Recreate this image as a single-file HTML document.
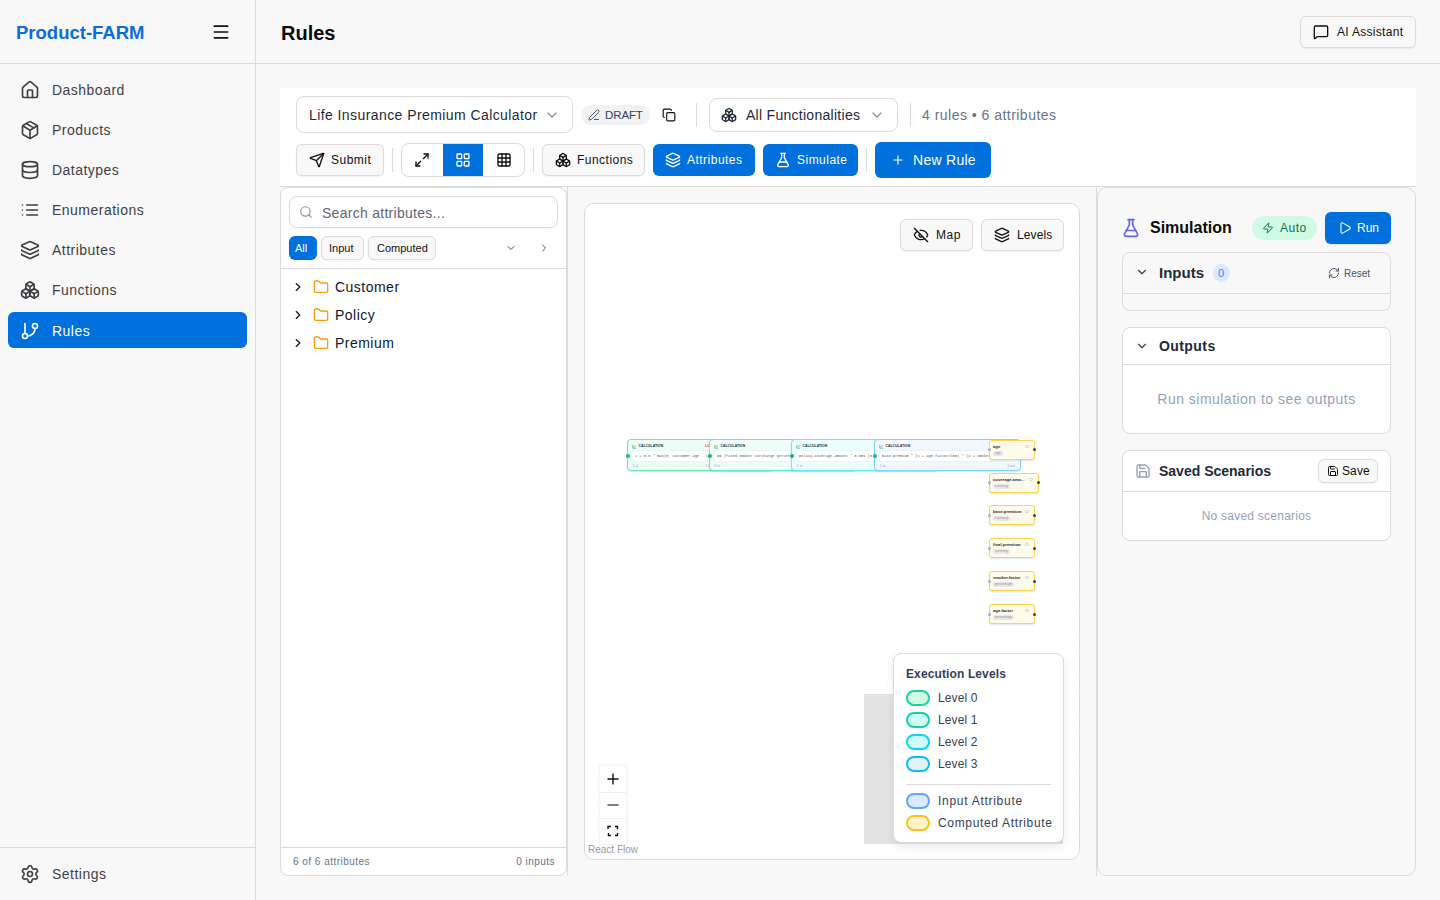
<!DOCTYPE html>
<html><head><meta charset="utf-8">
<style>
*{box-sizing:border-box;margin:0;padding:0}
html,body{width:1440px;height:900px;overflow:hidden}
body{font-family:"Liberation Sans",sans-serif;background:#f8f8f8;color:#0a0a0a;position:relative;letter-spacing:0.03em}
.a{position:absolute}
svg{display:block}
.ic{fill:none;stroke:currentColor;stroke-width:2;stroke-linecap:round;stroke-linejoin:round}
.b{font-weight:700;letter-spacing:0}
.bd{border:1px solid #e0d9dc}
/* sidebar */
#sb{left:0;top:0;width:256px;height:900px;border-right:1px solid #e0d9dc;background:#f8f8f8}
.nav{left:8px;width:239px;height:36px;border-radius:6px;color:#3f3f46;font-size:14px}
.nav svg{position:absolute;left:12px;top:8.5px}
.nav span{position:absolute;left:44px;top:10px;line-height:18px}
.nav.act{background:#0070dd;color:#fff}

.btn{border:1px solid #e0d9dc;border-radius:6px;background:#f8f8f8;box-shadow:0 1px 2px rgba(0,0,0,.06)}
.pbtn{border-radius:6px;background:#0070dd;color:#fff}
.t14{font-size:14px;line-height:18px}
.t12{font-size:12px;line-height:16px}
.sep{width:1px;background:#e0d9dc}

.cn{position:absolute;top:439px;width:147px;height:32px;border:1px solid;border-radius:4px;box-shadow:0 1px 1.5px rgba(0,0,0,.12)}
.cn .hi{position:absolute;left:4px;top:4px;width:5px;height:5px}
.cn .ht{position:absolute;left:10.5px;top:3.5px;font-size:3.4px;line-height:5px;font-weight:700;color:#1e293b;letter-spacing:0.05px}
.cn .cb{position:absolute;left:4px;top:11px;width:137px;height:10px;border-radius:3px;background:#fff;box-shadow:0 0 0 0.5px rgba(0,0,0,.05)}
.cn .ct{position:absolute;left:7px;top:13.5px;font-family:"Liberation Mono",monospace;font-size:3.7px;line-height:5px;color:#475569;letter-spacing:0;white-space:nowrap;overflow:hidden;width:133px}
.cn .fl{position:absolute;left:4.5px;top:23.5px;font-size:3.5px;line-height:5px;color:#94a3b8;letter-spacing:0}
.cn .fr{position:absolute;right:5px;top:23.5px;font-size:3.5px;line-height:5px;color:#94a3b8;letter-spacing:0}
.cn .hd{position:absolute;left:-2.5px;top:13.5px;width:4px;height:4px;border-radius:50%;background:#10b981}
.an{position:absolute;left:989px;width:46px;height:20px;border:1px solid #fcd34d;border-radius:3px;background:#fffbeb;box-shadow:0 1px 1.5px rgba(0,0,0,.1)}
.an .nm{position:absolute;left:3px;top:3px;font-size:4.2px;line-height:5px;font-weight:700;color:#1e293b;letter-spacing:0;white-space:nowrap}
.an .ch{position:absolute;left:3px;top:10px;height:5px;padding:0 2px;border-radius:2px;background:#e5e7eb;font-size:3.4px;line-height:5px;color:#8b93a3;letter-spacing:0}
.an .ei{position:absolute;right:5px;top:4px;width:4px;height:3px;border:0.8px solid #d4d7dd;border-radius:1px}
.an .hl{position:absolute;left:-2px;top:7.5px;width:3px;height:3px;border-radius:50%;background:#a8b0bd}
.an .hr{position:absolute;right:-2px;top:7.5px;width:3px;height:3px;border-radius:50%;background:#334155}
</style></head>
<body>
<!-- Sidebar -->
<div id="sb" class="a">
  <div class="a b" style="left:16px;top:22px;font-size:18.5px;line-height:22px;color:#0b6ddc">Product-FARM</div>
  <svg class="a ic" style="left:211px;top:22px;color:#111" width="20" height="20" viewBox="0 0 24 24"><path d="M4 5h16M4 12h16M4 19h16"/></svg>
  <div class="a" style="left:0;top:63px;width:256px;height:1px;background:#e0d9dc"></div>

  <div class="a nav" style="top:71px"><svg class="ic" width="20" height="20" viewBox="0 0 24 24"><path d="M15 21v-8a1 1 0 0 0-1-1h-4a1 1 0 0 0-1 1v8"/><path d="M3 10a2 2 0 0 1 .709-1.528l7-5.999a2 2 0 0 1 2.582 0l7 5.999A2 2 0 0 1 21 10v9a2 2 0 0 1-2 2H5a2 2 0 0 1-2-2z"/></svg><span>Dashboard</span></div>
  <div class="a nav" style="top:111px"><svg class="ic" width="20" height="20" viewBox="0 0 24 24"><path d="M11 21.73a2 2 0 0 0 2 0l7-4A2 2 0 0 0 21 16V8a2 2 0 0 0-1-1.73l-7-4a2 2 0 0 0-2 0l-7 4A2 2 0 0 0 3 8v8a2 2 0 0 0 1 1.73z"/><path d="M12 22V12"/><path d="m3.3 7 7.703 4.734a2 2 0 0 0 1.994 0L20.7 7"/><path d="m7.5 4.27 9 5.15"/></svg><span>Products</span></div>
  <div class="a nav" style="top:151px"><svg class="ic" width="20" height="20" viewBox="0 0 24 24"><ellipse cx="12" cy="5" rx="9" ry="3"/><path d="M3 5V19A9 3 0 0 0 21 19V5"/><path d="M3 12A9 3 0 0 0 21 12"/></svg><span>Datatypes</span></div>
  <div class="a nav" style="top:191px"><svg class="ic" width="20" height="20" viewBox="0 0 24 24"><path d="M3 12h.01"/><path d="M3 18h.01"/><path d="M3 6h.01"/><path d="M8 12h13"/><path d="M8 18h13"/><path d="M8 6h13"/></svg><span>Enumerations</span></div>
  <div class="a nav" style="top:231px"><svg class="ic" width="20" height="20" viewBox="0 0 24 24"><path d="M12.83 2.18a2 2 0 0 0-1.66 0L2.6 6.08a1 1 0 0 0 0 1.83l8.58 3.91a2 2 0 0 0 1.66 0l8.58-3.9a1 1 0 0 0 0-1.83z"/><path d="M2 12a1 1 0 0 0 .58.91l8.6 3.91a2 2 0 0 0 1.65 0l8.58-3.9A1 1 0 0 0 22 12"/><path d="M2 17a1 1 0 0 0 .58.91l8.6 3.91a2 2 0 0 0 1.65 0l8.58-3.9A1 1 0 0 0 22 17"/></svg><span>Attributes</span></div>
  <div class="a nav" style="top:271px"><svg class="ic" width="20" height="20" viewBox="0 0 24 24"><path d="M2.97 12.92A2 2 0 0 0 2 14.63v3.24a2 2 0 0 0 .97 1.71l3 1.8a2 2 0 0 0 2.06 0L12 19v-5.5l-5-3-4.03 2.42Z"/><path d="m7 16.5-4.74-2.85"/><path d="m7 16.5 5-3"/><path d="M7 16.5v5.17"/><path d="M12 13.5V19l3.970 2.38a2 2 0 0 0 2.06 0l3-1.8a2 2 0 0 0 .97-1.71v-3.24a2 2 0 0 0-.97-1.71L17 10.5l-5 3Z"/><path d="m17 16.5-5-3"/><path d="m17 16.5 4.740-2.85"/><path d="M17 16.5v5.17"/><path d="M7.97 4.42A2 2 0 0 0 7 6.13v4.37l5 3 5-3V6.13a2 2 0 0 0-.97-1.71l-3-1.8a2 2 0 0 0-2.06 0l-3 1.8Z"/><path d="M12 8 7.26 5.15"/><path d="m12 8 4.74-2.85"/><path d="M12 13.5V8"/></svg><span>Functions</span></div>
  <div class="a nav act" style="top:312px"><svg class="ic" width="20" height="20" viewBox="0 0 24 24"><line x1="6" x2="6" y1="3" y2="15"/><circle cx="18" cy="6" r="3"/><circle cx="6" cy="18" r="3"/><path d="M18 9a9 9 0 0 1-9 9"/></svg><span>Rules</span></div>

  <div class="a" style="left:0;top:847px;width:256px;height:1px;background:#e0d9dc"></div>
  <div class="a nav" style="top:855px"><svg class="ic" style="top:9px" width="20" height="20" viewBox="0 0 24 24"><path d="M9.671 4.136a2.34 2.34 0 0 1 4.659 0 2.34 2.34 0 0 0 3.319 1.915 2.34 2.34 0 0 1 2.33 4.033 2.34 2.34 0 0 0 0 3.831 2.34 2.34 0 0 1-2.33 4.033 2.34 2.34 0 0 0-3.319 1.915 2.34 2.34 0 0 1-4.659 0 2.34 2.34 0 0 0-3.32-1.915 2.34 2.34 0 0 1-2.33-4.033 2.34 2.34 0 0 0 0-3.831A2.34 2.34 0 0 1 6.35 6.051a2.34 2.34 0 0 0 3.319-1.915"/><circle cx="12" cy="12" r="3"/></svg><span>Settings</span></div>
</div>

<!-- Header -->
<div class="a b" style="left:281px;top:21px;font-size:20px;line-height:24px;color:#0a0a0a">Rules</div>
<div class="a" style="left:256px;top:63px;width:1184px;height:1px;background:#e0d9dc"></div>


<!-- AI Assistant -->
<div class="a btn" style="left:1300px;top:16px;width:116px;height:32px"></div>
<svg class="a ic" style="left:1313px;top:24px;color:#111" width="16" height="16" viewBox="0 0 24 24"><path d="M22 17a2 2 0 0 1-2 2H6.828a2 2 0 0 0-1.414.586l-2.202 2.202A.71.71 0 0 1 2 21.286V5a2 2 0 0 1 2-2h16a2 2 0 0 1 2 2z"/></svg>
<div class="a t12" style="left:1337px;top:24px;color:#111;letter-spacing:0.025em">AI Assistant</div>

<!-- Toolbar -->
<div class="a" style="left:280px;top:88px;width:1136px;height:99px;background:#fff;border-bottom:1px solid #e0d9dc"></div>
<div class="a bd" style="left:296px;top:96px;width:277px;height:37px;border-radius:8px;background:#fff"></div>
<div class="a t14" style="left:309px;top:106px;color:#1e293b;letter-spacing:0.03em">Life Insurance Premium Calculator</div>
<svg class="a ic" style="left:544px;top:107px;color:#8a94a6" width="16" height="16" viewBox="0 0 24 24"><path d="m6 9 6 6 6-6"/></svg>
<div class="a" style="left:581px;top:105px;width:69px;height:20px;border-radius:10px;background:#f1f2f4"></div>
<svg class="a ic" style="left:588px;top:109px;color:#475569" width="12" height="12" viewBox="0 0 24 24"><path d="M13 21h8"/><path d="M21.174 6.812a1 1 0 0 0-3.986-3.987L3.842 16.174a2 2 0 0 0-.5.83l-1.321 4.352a.5.5 0 0 0 .623.622l4.353-1.32a2 2 0 0 0 .83-.497z"/></svg>
<div class="a" style="left:605px;top:107px;font-size:11.5px;line-height:16px;color:#334155;letter-spacing:-0.01em">DRAFT</div>
<svg class="a ic" style="left:662px;top:108px;color:#111" width="14" height="14" viewBox="0 0 24 24"><rect width="14" height="14" x="8" y="8" rx="2" ry="2"/><path d="M4 16c-1.1 0-2-.9-2-2V4c0-1.1.9-2 2-2h10c1.1 0 2 .9 2 2"/></svg>
<div class="a sep" style="left:696px;top:103px;height:24px"></div>
<div class="a bd" style="left:709px;top:98px;width:189px;height:34px;border-radius:8px;background:#fff"></div>
<svg class="a ic" style="left:721px;top:107px;color:#1e293b" width="16" height="16" viewBox="0 0 24 24"><path d="M2.97 12.92A2 2 0 0 0 2 14.63v3.24a2 2 0 0 0 .97 1.71l3 1.8a2 2 0 0 0 2.06 0L12 19v-5.5l-5-3-4.03 2.42Z"/><path d="m7 16.5-4.74-2.85"/><path d="m7 16.5 5-3"/><path d="M7 16.5v5.17"/><path d="M12 13.5V19l3.97 2.38a2 2 0 0 0 2.06 0l3-1.8a2 2 0 0 0 .97-1.71v-3.24a2 2 0 0 0-.97-1.71L17 10.5l-5 3Z"/><path d="m17 16.5-5-3"/><path d="m17 16.5 4.74-2.85"/><path d="M17 16.5v5.17"/><path d="M7.97 4.42A2 2 0 0 0 7 6.13v4.37l5 3 5-3V6.13a2 2 0 0 0-.97-1.71l-3-1.8a2 2 0 0 0-2.06 0l-3 1.8Z"/><path d="M12 8 7.26 5.15"/><path d="m12 8 4.74-2.85"/><path d="M12 13.5V8"/></svg>
<div class="a t14" style="left:746px;top:106px;color:#1e293b;letter-spacing:0.02em">All Functionalities</div>
<svg class="a ic" style="left:869px;top:107px;color:#8a94a6" width="16" height="16" viewBox="0 0 24 24"><path d="m6 9 6 6 6-6"/></svg>
<div class="a sep" style="left:910px;top:103px;height:24px"></div>
<div class="a t14" style="left:922px;top:106px;color:#64748b">4 rules • 6 attributes</div>

<!-- row 2 -->
<div class="a btn" style="left:296px;top:144px;width:88px;height:32px"></div>
<svg class="a ic" style="left:309px;top:152px;color:#111" width="16" height="16" viewBox="0 0 24 24"><path d="M14.536 21.686a.5.5 0 0 0 .937-.024l6.5-19a.496.496 0 0 0-.635-.635l-19 6.5a.5.5 0 0 0-.024.937l7.93 3.18a2 2 0 0 1 1.112 1.11z"/><path d="m21.854 2.147-10.94 10.939"/></svg>
<div class="a t12" style="left:331px;top:152px;color:#111">Submit</div>
<div class="a sep" style="left:392px;top:148px;height:24px"></div>
<div class="a bd" style="left:401px;top:143px;width:124px;height:34px;border-radius:8px;background:#fff;overflow:hidden"><div class="a" style="left:41px;top:0;width:40px;height:32px;background:#0070dd"></div></div>
<svg class="a ic" style="left:414px;top:152px;color:#111" width="16" height="16" viewBox="0 0 24 24"><polyline points="15 3 21 3 21 9"/><polyline points="9 21 3 21 3 15"/><line x1="21" x2="14" y1="3" y2="10"/><line x1="3" x2="10" y1="21" y2="14"/></svg>
<svg class="a ic" style="left:455px;top:152px;color:#fff" width="16" height="16" viewBox="0 0 24 24"><rect width="7" height="7" x="3" y="3" rx="1"/><rect width="7" height="7" x="14" y="3" rx="1"/><rect width="7" height="7" x="14" y="14" rx="1"/><rect width="7" height="7" x="3" y="14" rx="1"/></svg>
<svg class="a ic" style="left:496px;top:152px;color:#111" width="16" height="16" viewBox="0 0 24 24"><rect width="18" height="18" x="3" y="3" rx="2"/><path d="M3 9h18"/><path d="M3 15h18"/><path d="M9 3v18"/><path d="M15 3v18"/></svg>
<div class="a sep" style="left:533px;top:148px;height:24px"></div>
<div class="a btn" style="left:542px;top:144px;width:103px;height:32px"></div>
<svg class="a ic" style="left:555px;top:152px;color:#111" width="16" height="16" viewBox="0 0 24 24"><path d="M2.97 12.92A2 2 0 0 0 2 14.63v3.24a2 2 0 0 0 .97 1.71l3 1.8a2 2 0 0 0 2.06 0L12 19v-5.5l-5-3-4.03 2.42Z"/><path d="m7 16.5-4.74-2.85"/><path d="m7 16.5 5-3"/><path d="M7 16.5v5.17"/><path d="M12 13.5V19l3.97 2.38a2 2 0 0 0 2.06 0l3-1.8a2 2 0 0 0 .97-1.71v-3.24a2 2 0 0 0-.97-1.71L17 10.5l-5 3Z"/><path d="m17 16.5-5-3"/><path d="m17 16.5 4.74-2.85"/><path d="M17 16.5v5.17"/><path d="M7.97 4.42A2 2 0 0 0 7 6.13v4.37l5 3 5-3V6.13a2 2 0 0 0-.97-1.71l-3-1.8a2 2 0 0 0-2.06 0l-3 1.8Z"/><path d="M12 8 7.26 5.15"/><path d="m12 8 4.74-2.85"/><path d="M12 13.5V8"/></svg>
<div class="a t12" style="left:577px;top:152px;color:#111">Functions</div>
<div class="a pbtn" style="left:653px;top:144px;width:102px;height:32px"></div>
<svg class="a ic" style="left:665px;top:152px;color:#fff" width="16" height="16" viewBox="0 0 24 24"><path d="M12.83 2.18a2 2 0 0 0-1.66 0L2.6 6.08a1 1 0 0 0 0 1.83l8.58 3.91a2 2 0 0 0 1.66 0l8.58-3.9a1 1 0 0 0 0-1.83z"/><path d="M2 12a1 1 0 0 0 .58.91l8.6 3.91a2 2 0 0 0 1.65 0l8.58-3.9A1 1 0 0 0 22 12"/><path d="M2 17a1 1 0 0 0 .58.91l8.6 3.91a2 2 0 0 0 1.65 0l8.58-3.9A1 1 0 0 0 22 17"/></svg>
<div class="a t12" style="left:687px;top:152px;color:#fff">Attributes</div>
<div class="a pbtn" style="left:763px;top:144px;width:95px;height:32px"></div>
<svg class="a ic" style="left:775px;top:152px;color:#fff" width="16" height="16" viewBox="0 0 24 24"><path d="M14 2v6a2 2 0 0 0 .245.96l5.51 10.08A2 2 0 0 1 18 22H6a2 2 0 0 1-1.755-2.96l5.51-10.08A2 2 0 0 0 10 8V2"/><path d="M6.453 15h11.094"/><path d="M8.5 2h7"/></svg>
<div class="a t12" style="left:797px;top:152px;color:#fff">Simulate</div>
<div class="a sep" style="left:866px;top:148px;height:24px"></div>
<div class="a pbtn" style="left:875px;top:142px;width:116px;height:36px"></div>
<svg class="a ic" style="left:891px;top:153px;color:#fff" width="14" height="14" viewBox="0 0 24 24"><path d="M5 12h14"/><path d="M12 5v14"/></svg>
<div class="a t14" style="left:913px;top:151px;color:#fff;letter-spacing:0.02em">New Rule</div>

<!-- Left panel -->
<div class="a bd" style="left:280px;top:187px;width:287px;height:689px;border-radius:8px;background:#fff"></div>
<div class="a sep" style="left:567px;top:186px;height:690px"></div>
<div class="a bd" style="left:289px;top:196px;width:269px;height:32px;border-radius:8px;background:#fff;box-shadow:0 1px 2px rgba(0,0,0,.05)"></div>
<svg class="a ic" style="left:299px;top:205px;color:#8a94a6" width="14" height="14" viewBox="0 0 24 24"><circle cx="11" cy="11" r="8"/><path d="m21 21-4.3-4.3"/></svg>
<div class="a t14" style="left:322px;top:204px;color:#5f6675;letter-spacing:0.02em">Search attributes...</div>
<div class="a" style="left:289px;top:236px;width:28px;height:24px;border-radius:6px;background:#0070dd"></div>
<div class="a" style="left:295px;top:241px;font-size:11px;line-height:14px;letter-spacing:0;color:#fff">All</div>
<div class="a btn" style="left:321px;top:236px;width:43px;height:24px"></div>
<div class="a" style="left:329px;top:241px;font-size:11px;line-height:14px;letter-spacing:0;color:#111">Input</div>
<div class="a btn" style="left:368px;top:236px;width:68px;height:24px"></div>
<div class="a" style="left:377px;top:241px;font-size:11px;line-height:14px;letter-spacing:0;color:#111">Computed</div>
<svg class="a ic" style="left:505px;top:242px;color:#555" width="12" height="12" viewBox="0 0 24 24"><path d="m6 9 6 6 6-6"/></svg>
<svg class="a ic" style="left:538px;top:242px;color:#555" width="12" height="12" viewBox="0 0 24 24"><path d="m9 18 6-6-6-6"/></svg>
<div class="a" style="left:281px;top:268px;width:285px;height:1px;background:#e0d9dc"></div>

<svg class="a ic" style="left:291px;top:280px;color:#111" width="14" height="14" viewBox="0 0 24 24"><path d="m9 18 6-6-6-6"/></svg>
<svg class="a ic" style="left:313px;top:279px;color:#f59e0b" width="16" height="16" viewBox="0 0 24 24"><path d="M20 20a2 2 0 0 0 2-2V8a2 2 0 0 0-2-2h-7.9a2 2 0 0 1-1.69-.9L9.6 3.9A2 2 0 0 0 7.93 3H4a2 2 0 0 0-2 2v13a2 2 0 0 0 2 2Z"/></svg>
<div class="a t14" style="left:335px;top:278px;color:#0f172a">Customer</div>
<svg class="a ic" style="left:291px;top:308px;color:#111" width="14" height="14" viewBox="0 0 24 24"><path d="m9 18 6-6-6-6"/></svg>
<svg class="a ic" style="left:313px;top:307px;color:#f59e0b" width="16" height="16" viewBox="0 0 24 24"><path d="M20 20a2 2 0 0 0 2-2V8a2 2 0 0 0-2-2h-7.9a2 2 0 0 1-1.69-.9L9.6 3.9A2 2 0 0 0 7.93 3H4a2 2 0 0 0-2 2v13a2 2 0 0 0 2 2Z"/></svg>
<div class="a t14" style="left:335px;top:306px;color:#0f172a">Policy</div>
<svg class="a ic" style="left:291px;top:336px;color:#111" width="14" height="14" viewBox="0 0 24 24"><path d="m9 18 6-6-6-6"/></svg>
<svg class="a ic" style="left:313px;top:335px;color:#f59e0b" width="16" height="16" viewBox="0 0 24 24"><path d="M20 20a2 2 0 0 0 2-2V8a2 2 0 0 0-2-2h-7.9a2 2 0 0 1-1.69-.9L9.6 3.9A2 2 0 0 0 7.93 3H4a2 2 0 0 0-2 2v13a2 2 0 0 0 2 2Z"/></svg>
<div class="a t14" style="left:335px;top:334px;color:#0f172a">Premium</div>

<div class="a" style="left:281px;top:847px;width:285px;height:1px;background:#e0d9dc"></div>
<div class="a" style="left:293px;top:855px;font-size:10px;line-height:13px;color:#64748b">6 of 6 attributes</div>
<div class="a" style="left:454px;top:855px;width:101px;text-align:right;font-size:10px;line-height:13px;color:#64748b">0 inputs</div>

<!-- Canvas -->
<div class="a bd" style="left:584px;top:203px;width:496px;height:657px;border-radius:10px;background:#fff;background-image:radial-gradient(circle,#fafafa 0.5px,transparent 0.7px);background-size:5px 5px"></div>
<div class="a sep" style="left:1096px;top:186px;height:690px"></div>

<!-- Right panel -->
<div class="a bd" style="left:1097px;top:187px;width:319px;height:689px;border-radius:10px;background:#f8f8f8"></div>

<svg class="a ic" style="left:1121px;top:218px;color:#6366f1" width="20" height="20" viewBox="0 0 24 24"><path d="M14 2v6a2 2 0 0 0 .245.96l5.51 10.08A2 2 0 0 1 18 22H6a2 2 0 0 1-1.755-2.96l5.51-10.08A2 2 0 0 0 10 8V2"/><path d="M6.453 15h11.094"/><path d="M8.5 2h7"/></svg>
<div class="a b" style="left:1150px;top:218px;font-size:16px;line-height:20px;color:#0a0a0a">Simulation</div>
<div class="a" style="left:1252px;top:216px;width:65px;height:24px;border-radius:12px;background:#d1fae5"></div>
<svg class="a ic" style="left:1262px;top:222px;color:#047857" width="12" height="12" viewBox="0 0 24 24"><path d="M4 14a1 1 0 0 1-.78-1.63l9.9-10.2a.5.5 0 0 1 .86.46l-1.92 6.02A1 1 0 0 0 13 10h7a1 1 0 0 1 .78 1.63l-9.9 10.2a.5.5 0 0 1-.86-.46l1.92-6.02A1 1 0 0 0 11 14z"/></svg>
<div class="a t12" style="left:1280px;top:220px;color:#047857">Auto</div>
<div class="a pbtn" style="left:1325px;top:212px;width:66px;height:32px;box-shadow:0 1px 2px rgba(0,0,0,.1)"></div>
<svg class="a ic" style="left:1338px;top:221px;color:#fff;stroke-width:1.8" width="14" height="14" viewBox="0 0 24 24"><path d="M5 5a2 2 0 0 1 3.008-1.728l11.997 6.998a2 2 0 0 1 .003 3.458l-12 7A2 2 0 0 1 5 19z"/></svg>
<div class="a t12" style="left:1357px;top:220px;color:#fff;letter-spacing:0">Run</div>

<div class="a bd" style="left:1122px;top:252px;width:269px;height:59px;border-radius:8px;background:#f8f8f8"></div>
<div class="a" style="left:1123px;top:293px;width:267px;height:1px;background:#e0d9dc"></div>
<svg class="a ic" style="left:1135px;top:265px;color:#334155" width="14" height="14" viewBox="0 0 24 24"><path d="m6 9 6 6 6-6"/></svg>
<div class="a b" style="left:1159px;top:264px;font-size:15px;line-height:18px;color:#1e293b">Inputs</div>
<div class="a" style="left:1213px;top:264px;width:17px;height:18px;border-radius:9px;background:#dbeafe"></div>
<div class="a" style="left:1218px;top:266px;font-size:11px;line-height:14px;color:#3b82f6">0</div>
<svg class="a ic" style="left:1328px;top:267px;color:#475569" width="12" height="12" viewBox="0 0 24 24"><path d="M3 12a9 9 0 0 1 9-9 9.75 9.75 0 0 1 6.74 2.74L21 8"/><path d="M21 3v5h-5"/><path d="M21 12a9 9 0 0 1-9 9 9.75 9.75 0 0 1-6.74-2.74L3 16"/><path d="M8 16H3v5"/></svg>
<div class="a" style="left:1344px;top:267px;font-size:10px;line-height:14px;color:#475569;letter-spacing:0">Reset</div>

<div class="a bd" style="left:1122px;top:327px;width:269px;height:107px;border-radius:8px;background:#fff"></div>
<div class="a" style="left:1123px;top:364px;width:267px;height:1px;background:#e0d9dc"></div>
<svg class="a ic" style="left:1135px;top:339px;color:#334155" width="14" height="14" viewBox="0 0 24 24"><path d="m6 9 6 6 6-6"/></svg>
<div class="a b" style="left:1159px;top:337px;font-size:14px;line-height:18px;color:#1e293b;letter-spacing:0.03em">Outputs</div>
<div class="a t14" style="left:1122px;top:390px;width:269px;text-align:center;color:#94a3b8">Run simulation to see outputs</div>

<div class="a bd" style="left:1122px;top:450px;width:269px;height:91px;border-radius:8px;background:#fff"></div>
<div class="a" style="left:1123px;top:491px;width:267px;height:1px;background:#e0d9dc"></div>
<svg class="a ic" style="left:1135px;top:463px;color:#94a3b8" width="16" height="16" viewBox="0 0 24 24"><path d="M15.2 3a2 2 0 0 1 1.4.6l3.8 3.8a2 2 0 0 1 .6 1.4V19a2 2 0 0 1-2 2H5a2 2 0 0 1-2-2V5a2 2 0 0 1 2-2z"/><path d="M17 21v-7a1 1 0 0 0-1-1H8a1 1 0 0 0-1 1v7"/><path d="M7 3v4a1 1 0 0 0 1 1h7"/></svg>
<div class="a b" style="left:1159px;top:462px;font-size:14px;line-height:18px;color:#1e293b">Saved Scenarios</div>
<div class="a btn" style="left:1318px;top:459px;width:60px;height:24px"></div>
<svg class="a ic" style="left:1327px;top:465px;color:#111" width="12" height="12" viewBox="0 0 24 24"><path d="M15.2 3a2 2 0 0 1 1.4.6l3.8 3.8a2 2 0 0 1 .6 1.4V19a2 2 0 0 1-2 2H5a2 2 0 0 1-2-2V5a2 2 0 0 1 2-2z"/><path d="M17 21v-7a1 1 0 0 0-1-1H8a1 1 0 0 0-1 1v7"/><path d="M7 3v4a1 1 0 0 0 1 1h7"/></svg>
<div class="a t12" style="left:1342px;top:463px;color:#111;letter-spacing:0.01em">Save</div>
<div class="a t12" style="left:1122px;top:508px;width:269px;text-align:center;color:#94a3b8;letter-spacing:0.02em">No saved scenarios</div>

<!-- canvas nodes -->
<div class="cn" style="left:627px;border-color:#6ee7b7;background:#ecfdf5"><svg class="hi" viewBox="0 0 24 24" fill="none" stroke="#16a34a" stroke-width="3"><path d="M4 4v16h16"/><path d="M10 14l8-8"/></svg><div class="ht">CALCULATION</div><div style="position:absolute;left:75px;top:3px;width:14px;height:7px;border-radius:4px;background:#fff;box-shadow:0 0 0 0.5px rgba(0,0,0,.06)"><div style="position:absolute;left:2px;top:1px;font-size:3.5px;line-height:5px;color:#b45309;font-weight:700;letter-spacing:0">L0</div></div><div class="cb"></div><div class="ct">1 + 0.5 * max(0, customer.age - 18) / 10</div><div class="fl">1 in</div><div class="fr" style="right:auto;left:77px">1 out</div><div class="hd"></div></div>
<div class="cn" style="left:709px;border-color:#5eead4;background:#effdf9"><svg class="hi" viewBox="0 0 24 24" fill="none" stroke="#16a34a" stroke-width="3"><path d="M4 4v16h16"/><path d="M10 14l8-8"/></svg><div class="ht">CALCULATION</div><div class="cb"></div><div class="ct">== (fixed smoker surcharge percentage)</div><div class="fl">0 in</div><div class="fr">1 out</div><div class="hd"></div></div>
<div class="cn" style="left:791px;border-color:#67e8f9;background:#ecfeff"><svg class="hi" viewBox="0 0 24 24" fill="none" stroke="#16a34a" stroke-width="3"><path d="M4 4v16h16"/><path d="M10 14l8-8"/></svg><div class="ht">CALCULATION</div><div class="cb"></div><div class="ct">policy.coverage.amount * 0.001 (0.5)</div><div class="fl">1 in</div><div class="fr">1 out</div><div class="hd"></div></div>
<div class="cn" style="left:874px;border-color:#7dd3fc;background:#f0f8ff"><svg class="hi" viewBox="0 0 24 24" fill="none" stroke="#16a34a" stroke-width="3"><path d="M4 4v16h16"/><path d="M10 14l8-8"/></svg><div class="ht">CALCULATION</div><div class="cb"></div><div class="ct">base.premium * (1 + age.factor/100) * (1 + smoker.factor/100)</div><div class="fl">1 in</div><div class="fr">1 out</div><div class="hd"></div></div>
<div class="an" style="top:439.5px;width:46px"><div class="nm">age</div><div class="ch">age</div><div class="ei"></div><div class="hl"></div><div class="hr"></div></div>
<div class="an" style="top:472.5px;width:50px"><div class="nm">coverage.amo...</div><div class="ch">currency</div><div class="ei"></div><div class="hl"></div><div class="hr"></div></div>
<div class="an" style="top:505px;width:46px"><div class="nm">base.premium</div><div class="ch">currency</div><div class="ei"></div><div class="hl"></div><div class="hr"></div></div>
<div class="an" style="top:538px;width:46px"><div class="nm">final.premium</div><div class="ch">currency</div><div class="ei"></div><div class="hl"></div><div class="hr"></div></div>
<div class="an" style="top:571px;width:46px"><div class="nm">smoker.factor</div><div class="ch">percentage</div><div class="ei"></div><div class="hl"></div><div class="hr"></div></div>
<div class="an" style="top:604px;width:46px"><div class="nm">age.factor</div><div class="ch">percentage</div><div class="ei"></div><div class="hl"></div><div class="hr"></div></div>

<!-- Map / Levels buttons -->
<div class="a btn" style="left:900px;top:219px;width:73px;height:32px;border-radius:6px"></div>
<svg class="a ic" style="left:913px;top:227px;color:#111" width="16" height="16" viewBox="0 0 24 24"><path d="M10.733 5.076a10.744 10.744 0 0 1 11.205 6.575 1 1 0 0 1 0 .696 10.747 10.747 0 0 1-1.444 2.49"/><path d="M14.084 14.158a3 3 0 0 1-4.242-4.242"/><path d="M17.479 17.499a10.75 10.75 0 0 1-15.417-5.151 1 1 0 0 1 0-.696 10.75 10.75 0 0 1 4.446-5.143"/><path d="m2 2 20 20"/></svg>
<div class="a t12" style="left:936px;top:227px;color:#111">Map</div>
<div class="a btn" style="left:981px;top:219px;width:83px;height:32px;border-radius:6px"></div>
<svg class="a ic" style="left:994px;top:227px;color:#111" width="16" height="16" viewBox="0 0 24 24"><path d="M12.83 2.18a2 2 0 0 0-1.66 0L2.6 6.08a1 1 0 0 0 0 1.83l8.58 3.91a2 2 0 0 0 1.66 0l8.58-3.9a1 1 0 0 0 0-1.83z"/><path d="M2 12a1 1 0 0 0 .58.91l8.6 3.91a2 2 0 0 0 1.65 0l8.58-3.9A1 1 0 0 0 22 12"/><path d="M2 17a1 1 0 0 0 .58.91l8.6 3.91a2 2 0 0 0 1.65 0l8.58-3.9A1 1 0 0 0 22 17"/></svg>
<div class="a t12" style="left:1017px;top:227px;color:#111;letter-spacing:0.01em">Levels</div>

<!-- minimap bg -->
<div class="a" style="left:864px;top:694px;width:199px;height:150px;background:#e3e3e3"></div>
<!-- legend -->
<div class="a bd" style="left:893px;top:653px;width:171px;height:190px;border-radius:8px;background:#fff;box-shadow:0 4px 8px rgba(0,0,0,.08)"></div>
<div class="a b" style="left:906px;top:666px;font-size:12px;line-height:16px;color:#334155;letter-spacing:0.01em">Execution Levels</div>
<div class="a" style="left:906px;top:690px;width:24px;height:16px;border-radius:8px;border:2px solid #1cd294;background:#d1fae5"></div>
<div class="a t12" style="left:938px;top:690px;color:#374151;letter-spacing:0.01em">Level 0</div>
<div class="a" style="left:906px;top:712px;width:24px;height:16px;border-radius:8px;border:2px solid #14cfa8;background:#ccfbf1"></div>
<div class="a t12" style="left:938px;top:712px;color:#374151;letter-spacing:0.01em">Level 1</div>
<div class="a" style="left:906px;top:734px;width:24px;height:16px;border-radius:8px;border:2px solid #06d6f0;background:#cffafe"></div>
<div class="a t12" style="left:938px;top:734px;color:#374151;letter-spacing:0.01em">Level 2</div>
<div class="a" style="left:906px;top:756px;width:24px;height:16px;border-radius:8px;border:2px solid #0ebcf5;background:#e0f2fe"></div>
<div class="a t12" style="left:938px;top:756px;color:#374151;letter-spacing:0.01em">Level 3</div>
<div class="a" style="left:906px;top:784px;width:145px;height:1px;background:#e0d9dc"></div>
<div class="a" style="left:906px;top:793px;width:24px;height:16px;border-radius:8px;border:2px solid #60a5fa;background:#dbeafe"></div>
<div class="a t12" style="left:938px;top:793px;color:#374151;letter-spacing:0.06em">Input Attribute</div>
<div class="a" style="left:906px;top:815px;width:24px;height:16px;border-radius:8px;border:2px solid #fbbf24;background:#fef3c7"></div>
<div class="a t12" style="left:938px;top:815px;color:#374151;letter-spacing:0.055em">Computed Attribute</div>

<!-- controls -->
<div class="a" style="left:600px;top:766px;width:26px;height:78px;background:#fefefe;box-shadow:0 0 2px 1px rgba(0,0,0,.06)"></div>
<div class="a" style="left:600px;top:792px;width:26px;height:1px;background:#eee"></div>
<div class="a" style="left:600px;top:818px;width:26px;height:1px;background:#eee"></div>
<svg class="a" style="left:607px;top:773px" width="12" height="12" viewBox="0 0 12 12"><path d="M6 0.5v11M0.5 6h11" stroke="#111" stroke-width="1.4"/></svg>
<svg class="a" style="left:607px;top:799px" width="12" height="12" viewBox="0 0 12 12"><path d="M0.5 6h11" stroke="#111" stroke-width="1.1"/></svg>
<svg class="a" style="left:607px;top:825px" width="12" height="12" viewBox="0 0 12 12"><path d="M1 4V1.5h3M8 1.5h2.5V4M10.5 8v2.5H8M4 10.5H1.5V8" fill="none" stroke="#111" stroke-width="1.4"/></svg>
<div class="a" style="left:588px;top:844px;font-size:10px;line-height:12px;color:#999;letter-spacing:0">React Flow</div>
</body></html>
